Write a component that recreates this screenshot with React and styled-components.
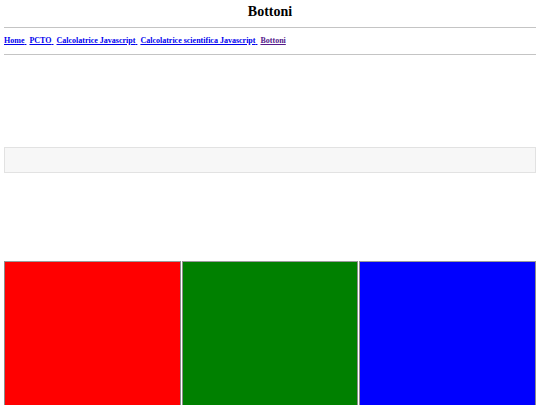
import styled, { createGlobalStyle } from "styled-components"

const GlobalStyle = createGlobalStyle`
  body {
    margin: 4px;
    font-family: "Liberation Serif", "Times New Roman", serif;
    background: #fff;
    overflow: hidden;
  }
`

const Title = styled.h1`
  font-size: 14px;
  font-weight: bold;
  text-align: center;
  line-height: 16px;
  margin: 0;
`

const Rule = styled.hr`
  height: 0;
  border: none;
  border-top: 1px solid #c4c4c4;
  margin: ${(p) => p.$top}px 0 ${(p) => p.$bottom}px;
`

const Nav = styled.p`
  margin: 0;
  font-size: 8px;
  line-height: 9px;
  font-weight: bold;
  white-space: nowrap;
`

const NavLink = styled.a`
  color: ${(p) => (p.$visited ? "#551a8b" : "#0000ee")};
  text-decoration: underline;
  margin-right: 3px;
`

const Panel = styled.div`
  height: 24px;
  margin-top: 92px;
  background: #f7f7f7;
  border: 1px solid #e2e2e2;
`

const Buttons = styled.div`
  display: flex;
  gap: 1px;
  margin-top: 88px;
`

const ColorButton = styled.button`
  flex: 1;
  height: 200px;
  padding: 0;
  background: ${(p) => p.$color};
  border: 1px solid #8c8c8c;
  border-top-color: #9a9a9a;
`

const links = [
  "Home",
  "PCTO",
  "Calcolatrice Javascript",
  "Calcolatrice scientifica Javascript",
]

const App = () => {
  return (
    <>
      <GlobalStyle />
      <Title>Bottoni</Title>
      <Rule $top={7} $bottom={8} />
      <Nav>
        {links.map((l) => (
          <NavLink key={l} href="#">
            {l}{" "}
          </NavLink>
        ))}
        <NavLink href="#" $visited>
          Bottoni
        </NavLink>
      </Nav>
      <Rule $top={9} $bottom={0} />
      <Panel />
      <Buttons>
        <ColorButton $color="#ff0000" />
        <ColorButton $color="#008000" />
        <ColorButton $color="#0000ff" />
      </Buttons>
    </>
  )
}

export default App
